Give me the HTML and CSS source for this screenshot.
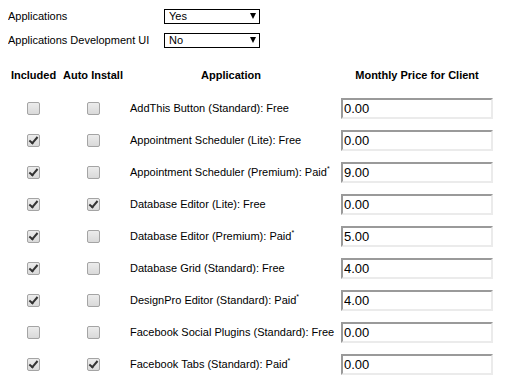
FILE: index.html
```html
<!DOCTYPE html>
<html lang="en">
<head>
  <meta charset="UTF-8">
  <title>Applications</title>
  <link rel="stylesheet" href="styles.css">
</head>
<body>
  <!-- Top settings -->
  <div class="settings">
    <div class="field">
      <label class="field-label" for="apps">Applications</label>
      <span class="select-wrap">
        <select id="apps" class="select">
          <option>Yes</option>
          <option>No</option>
        </select>
      </span>
    </div>
    <div class="field">
      <label class="field-label" for="appsDev">Applications Development UI</label>
      <span class="select-wrap">
        <select id="appsDev" class="select">
          <option>No</option>
          <option>Yes</option>
        </select>
      </span>
    </div>
  </div>

  <!-- Applications table -->
  <table class="apps-table">
    <colgroup>
      <col class="col-included">
      <col class="col-auto">
      <col class="col-app">
      <col class="col-price">
    </colgroup>
    <thead>
      <tr>
        <th>Included</th>
        <th>Auto Install</th>
        <th>Application</th>
        <th>Monthly Price for Client</th>
      </tr>
    </thead>
    <tbody id="appRows"></tbody>
  </table>

  <script>
    const apps = [
      { name: 'AddThis Button (Standard)', paid: false, included: false, auto: false, price: '0.00' },
      { name: 'Appointment Scheduler (Lite)', paid: false, included: true, auto: false, price: '0.00' },
      { name: 'Appointment Scheduler (Premium)', paid: true, included: true, auto: false, price: '9.00' },
      { name: 'Database Editor (Lite)', paid: false, included: true, auto: true, price: '0.00' },
      { name: 'Database Editor (Premium)', paid: true, included: true, auto: false, price: '5.00' },
      { name: 'Database Grid (Standard)', paid: false, included: true, auto: false, price: '4.00' },
      { name: 'DesignPro Editor (Standard)', paid: true, included: true, auto: false, price: '4.00' },
      { name: 'Facebook Social Plugins (Standard)', paid: false, included: false, auto: false, price: '0.00' },
      { name: 'Facebook Tabs (Standard)', paid: true, included: true, auto: true, price: '0.00' }
    ];

    const body = document.getElementById('appRows');
    apps.forEach(app => {
      const row = document.createElement('tr');
      row.innerHTML = `
        <td class="center"><input type="checkbox" class="check" ${app.included ? 'checked' : ''}></td>
        <td class="center"><input type="checkbox" class="check" ${app.auto ? 'checked' : ''}></td>
        <td class="app-name">${app.name}: ${app.paid ? 'Paid<sup>*</sup>' : 'Free'}</td>
        <td class="center"><input type="text" class="price" value="${app.price}"></td>
      `;
      body.appendChild(row);
    });
  </script>
</body>
</html>
```

FILE: styles.css
```css
body {
  margin: 8px;
  font-family: "Liberation Sans", Arial, sans-serif;
  font-size: 11px;
  color: #000;
  background: #fff;
}
.settings {
  display: flex;
  flex-direction: column;
  gap: 8px;
}
.field {
  display: flex;
  align-items: center;
  height: 16px;
}
.field-label {
  width: 156px;
}
.select-wrap {
  position: relative;
  display: inline-block;
}
.select {
  appearance: none;
  -webkit-appearance: none;
  width: 96px;
  height: 15px;
  margin: 0;
  padding: 0 0 0 4px;
  border: 1px solid #000;
  border-radius: 0;
  background: #fff;
  font-family: "Liberation Sans", Arial, sans-serif;
  font-size: 11px;
  color: #000;
  line-height: 13px;
}
.select-wrap::after {
  content: "";
  position: absolute;
  right: 4px;
  top: 4px;
  border-left: 3.5px solid transparent;
  border-right: 3.5px solid transparent;
  border-top: 6px solid #000;
  pointer-events: none;
}
.apps-table {
  margin-top: 10px;
  border-collapse: collapse;
  table-layout: fixed;
  width: 491px;
}
.col-included { width: 51px; }
.col-auto { width: 68px; }
.col-app { width: 208px; }
.col-price { width: 164px; }
.apps-table th {
  height: 34px;
  padding: 0;
  font-weight: bold;
  font-size: 11px;
  text-align: center;
  vertical-align: middle;
  white-space: nowrap;
}
.apps-table td {
  height: 32px;
  padding: 0;
  vertical-align: middle;
}
.center {
  text-align: center;
}
.app-name {
  padding-left: 3px !important;
  font-size: 11px;
  white-space: nowrap;
}
.app-name sup {
  font-size: 7px;
  line-height: 0;
  vertical-align: 5px;
}
.check {
  appearance: none;
  -webkit-appearance: none;
  position: relative;
  width: 13px;
  height: 13px;
  margin: 0;
  vertical-align: middle;
  border: 1px solid #a4a4a4;
  border-radius: 2px;
  background: linear-gradient(#ececec, #d9d9d9);
}
.check:checked::after {
  content: "";
  position: absolute;
  left: 3px;
  top: 0px;
  width: 3px;
  height: 7px;
  border-right: 2px solid #333;
  border-bottom: 2px solid #333;
  transform: rotate(40deg);
}
.price {
  box-sizing: border-box;
  width: 152px;
  height: 21px;
  margin: 0;
  padding: 0 0 0 1px;
  border-width: 2px;
  border-style: solid;
  border-color: #9a9a9a #ebebeb #ebebeb #9a9a9a;
  font-family: "Liberation Sans", Arial, sans-serif;
  font-size: 13px;
  color: #000;
  vertical-align: middle;
}
```
